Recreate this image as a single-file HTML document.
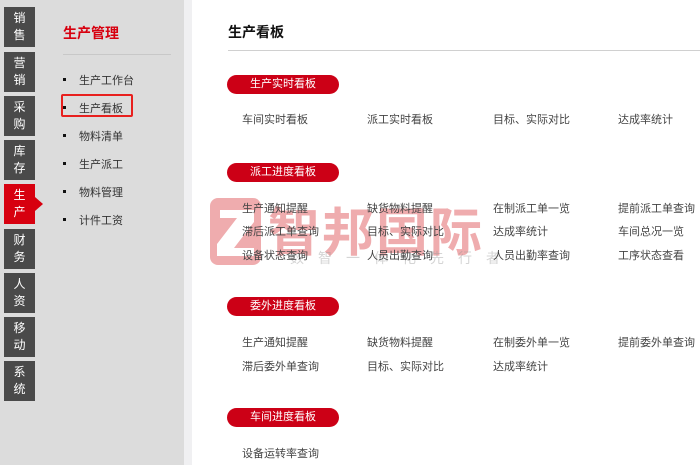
<!DOCTYPE html><html><head><meta charset="utf-8"><style>
body{margin:0;width:700px;height:465px;overflow:hidden;position:relative;background:#fff;font-family:"Liberation Sans","Noto Sans CJK SC",sans-serif;}
.side{position:absolute;left:0;top:0;width:184px;height:465px;background:#dcdcdc}
.strip{position:absolute;left:184px;top:0;width:8px;height:465px;background:#f0f0f2}
.nb{position:absolute;left:4px;width:31px;height:40px;background:#4a4a4a;color:#fff;font-size:12px;line-height:17px;text-align:center;padding-top:3px;box-sizing:border-box}
.nb.on{background:#d7000f}
.nb.on:after{content:"";position:absolute;right:-8px;top:13px;border-left:8px solid #d7000f;border-top:7px solid transparent;border-bottom:7px solid transparent}
.h{position:absolute;left:63px;top:23px;color:#d7000f;font-size:14px;font-weight:bold}
.hl{position:absolute;left:63px;top:54px;width:108px;height:1px;background:#c8c8c8}
.mi{position:absolute;left:79px;font-size:11px;color:#333}
.mi:before{content:"";position:absolute;left:-16px;top:6px;width:3px;height:3px;background:#111}
.sel{position:absolute;left:61px;top:94px;width:72px;height:23px;border:2px solid #e8201e;border-radius:2px;box-sizing:border-box}
.t{position:absolute;left:228px;top:22px;font-size:14px;font-weight:bold;color:#111}
.line{position:absolute;left:228px;top:50px;width:472px;height:1px;background:#d0d0d0}
.p{position:absolute;left:227px;width:112px;height:19px;border-radius:10px;background:#cc0016;color:#fff;font-size:11px;line-height:19px;text-align:center}
.i{position:absolute;font-size:11px;color:#444;white-space:nowrap}
.wm{position:absolute;left:210px;top:198px;width:51px;height:67px;border-radius:8px;background:rgba(220,70,75,.45)}
.wt{position:absolute;left:268px;top:191px;font-size:52px;font-weight:bold;color:rgba(220,70,75,.45);letter-spacing:2px;white-space:nowrap}
.ws{position:absolute;left:290px;top:248px;font-size:14px;color:rgba(150,150,150,.4);letter-spacing:14px;white-space:nowrap}
</style></head><body>
<div class="side"></div><div class="strip"></div>
<div class="nb" style="top:7px">销<br>售</div>
<div class="nb" style="top:52px">营<br>销</div>
<div class="nb" style="top:96px">采<br>购</div>
<div class="nb" style="top:140px">库<br>存</div>
<div class="nb on" style="top:184px">生<br>产</div>
<div class="nb" style="top:229px">财<br>务</div>
<div class="nb" style="top:273px">人<br>资</div>
<div class="nb" style="top:317px">移<br>动</div>
<div class="nb" style="top:361px">系<br>统</div>
<div class="h">生产管理</div><div class="hl"></div>
<div class="mi" style="top:72px">生产工作台</div>
<div class="mi" style="top:100px">生产看板</div>
<div class="mi" style="top:128px">物料清单</div>
<div class="mi" style="top:156px">生产派工</div>
<div class="mi" style="top:184px">物料管理</div>
<div class="mi" style="top:212px">计件工资</div>
<div class="sel"></div>
<div class="t">生产看板</div><div class="line"></div>
<div class="wm"><svg width="51" height="67" viewBox="0 0 51 67"><path d="M10 12H44V24L24 50H44V58H7V46L27 20H10Z" fill="#fff"/></svg></div>
<div class="wt">智邦国际</div>
<div class="ws">数智一体化先行者</div>
<div class="p" style="top:75px">生产实时看板</div>
<div class="i" style="left:242px;top:111px">车间实时看板</div><div class="i" style="left:367px;top:111px">派工实时看板</div><div class="i" style="left:493px;top:111px">目标、实际对比</div><div class="i" style="left:618px;top:111px">达成率统计</div>
<div class="p" style="top:163px">派工进度看板</div>
<div class="i" style="left:242px;top:200px">生产通知提醒</div><div class="i" style="left:367px;top:200px">缺货物料提醒</div><div class="i" style="left:493px;top:200px">在制派工单一览</div><div class="i" style="left:618px;top:200px">提前派工单查询</div>
<div class="i" style="left:242px;top:223px">滞后派工单查询</div><div class="i" style="left:367px;top:223px">目标、实际对比</div><div class="i" style="left:493px;top:223px">达成率统计</div><div class="i" style="left:618px;top:223px">车间总况一览</div>
<div class="i" style="left:242px;top:247px">设备状态查询</div><div class="i" style="left:367px;top:247px">人员出勤查询</div><div class="i" style="left:493px;top:247px">人员出勤率查询</div><div class="i" style="left:618px;top:247px">工序状态查看</div>
<div class="p" style="top:297px">委外进度看板</div>
<div class="i" style="left:242px;top:334px">生产通知提醒</div><div class="i" style="left:367px;top:334px">缺货物料提醒</div><div class="i" style="left:493px;top:334px">在制委外单一览</div><div class="i" style="left:618px;top:334px">提前委外单查询</div>
<div class="i" style="left:242px;top:358px">滞后委外单查询</div><div class="i" style="left:367px;top:358px">目标、实际对比</div><div class="i" style="left:493px;top:358px">达成率统计</div>
<div class="p" style="top:408px">车间进度看板</div>
<div class="i" style="left:242px;top:445px">设备运转率查询</div>
</body></html>
